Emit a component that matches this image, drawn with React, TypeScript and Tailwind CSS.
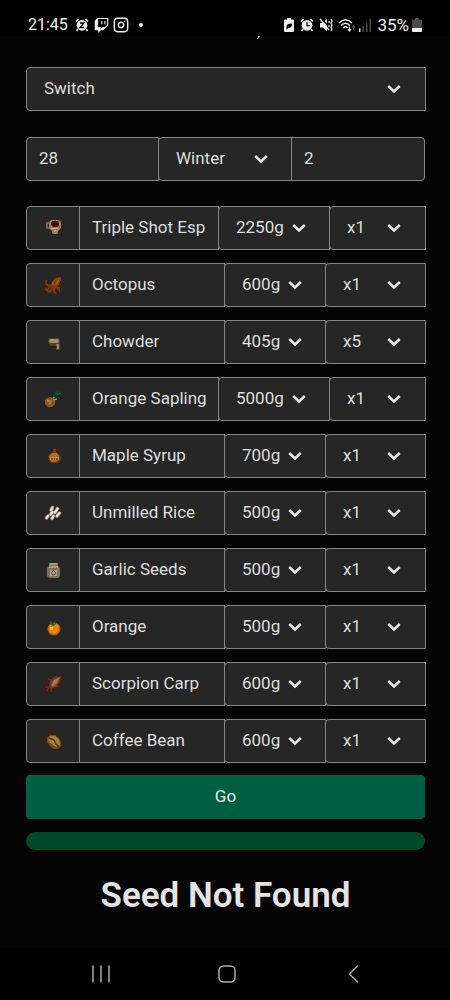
import { useState } from 'react';
import type { ReactNode } from 'react';
import { FaTwitch } from 'react-icons/fa';
import { Instagram } from 'lucide-react';

interface CartItem {
  name: string;
  prices: string[];
  quantity: string;
  icon: ReactNode;
}

const cartItems: CartItem[] = [
  {
    name: 'Triple Shot Espresso',
    prices: ['2250g'],
    quantity: 'x1',
    icon: (
      <>
        <path d="M6 4H3v5h4" stroke="#9c6c50" strokeWidth="1.6" />
        <path d="M7 1h8l2 2v6l-3 3v2l-1 1H9l-1-1v-2L5 9V3z" fill="#a47a60" />
        <path d="M8 2h6l1 2v3l-2 1H9L7 6V4z" fill="#3c0f10" />
        <path d="M7 9.500h7M10 12h2" stroke="#d0aa8b" />
      </>
    ),
  },
  {
    name: 'Octopus',
    prices: ['600g'],
    quantity: 'x1',
    icon: (
      <>
        <path d="M8 6l3-4 6-1v3l-3 6-3 3-4-3z" fill="#88420c" />
        <path d="M9 8L5 10 2 8V4M7 9l-4 5-2-1M9 10l-3 6-3-1M10 11v5l2 1M12 10l3 4v-3" stroke="#7f380b" strokeWidth="2" />
        <path d="M9 6v3m3-1 3-4" stroke="#b86613" strokeWidth="1.2" />
      </>
    ),
  },
  {
    name: 'Chowder',
    prices: ['405g'],
    quantity: 'x5',
    icon: (
      <>
        <path d="M5 5h10l1 2v10h-4v-4H7l-3-3V7z" fill="#55402f" />
        <path d="M6 6h8l1 2-1 2H6L5 8z" fill="#9b8966" />
        <path d="M12 11h3v5h-2v-3z" fill="#a3865d" />
        <path d="M7 7h2m2 1h2" stroke="#c0b18c" />
      </>
    ),
  },
  {
    name: 'Orange Sapling',
    prices: ['5000g'],
    quantity: 'x1',
    icon: (
      <>
        <path d="M3 8l4-1 4 2v5l-3 3H4l-3-3v-4z" fill="#8a5926" />
        <path d="M3 11h3v3m3-6 3-2m-3 4 4-1" stroke="#bd8841" strokeWidth="1.4" />
        <path d="M10 4l2-3 3 1 2-1v5l-3-1-2 3-3-2z" fill="#10422a" />
        <path d="M12 3l2 2 2-2" stroke="#17663b" />
      </>
    ),
  },
  {
    name: 'Maple Syrup',
    prices: ['700g'],
    quantity: 'x1',
    icon: (
      <>
        <path d="M9 2h3v3l4 3 1 4-3 4H7l-3-4 1-4 4-3z" fill="#803609" />
        <path d="M8 6h5l2 3-1 4-2 2H8l-2-2-1-4z" fill="#c26a12" />
        <path d="M6 10h9v3H6z" fill="#a38a65" />
        <path d="M7 12h2m1 0h1m1 0h2" stroke="#4d2414" />
        <path d="M9 3h3" stroke="#a33a14" />
      </>
    ),
  },
  {
    name: 'Unmilled Rice',
    prices: ['500g'],
    quantity: 'x1',
    icon: (
      <>
        <path
          d="M2.500 14l1.500-2M7 6l1.500-2.500M6.500 10.500l2-2.500M8 14.500l1.500-2.500M11 8.500l2.500-4M13 12l2.500-3"
          stroke="#6f5c4b"
          strokeWidth="3.8"
          strokeLinecap="round"
        />
        <path
          d="M2.500 14l1.500-2M7 6l1.500-2.500M6.500 10.500l2-2.500M8 14.500l1.500-2.500M11 8.500l2.500-4M13 12l2.500-3"
          stroke="#efe6dc"
          strokeWidth="2.4"
          strokeLinecap="round"
        />
      </>
    ),
  },
  {
    name: 'Garlic Seeds',
    prices: ['500g'],
    quantity: 'x1',
    icon: (
      <>
        <path d="M5 2h9v3l2 2v8l-2 2H5l-2-2V7l2-2z" fill="#80705a" />
        <path d="M6 3h7M5 6h9" stroke="#b7a789" strokeWidth="1.5" />
        <path d="M6 9h7v6H6z" fill="#b3a58b" />
        <path d="M9.500 9l-2 3 1 2h2l1-2z" stroke="#514839" />
      </>
    ),
  },
  {
    name: 'Orange',
    prices: ['500g'],
    quantity: 'x1',
    icon: (
      <>
        <circle cx="10" cy="11" r="6.5" fill="#bd5908" />
        <circle cx="10" cy="10.5" r="5.2" fill="#e9890b" />
        <path d="M6 9h3v3H6z" fill="#ffc12e" />
        <path d="M5 3l4 1 1 2 3-2-2 3-2 1-3-2z" fill="#1d5928" />
      </>
    ),
  },
  {
    name: 'Scorpion Carp',
    prices: ['600g'],
    quantity: 'x1',
    icon: (
      <>
        <path d="M1 12h4l2 1v4M5 12l-2 4M7 5L4 4M12 12l2-1" stroke="#8a1f14" strokeWidth="1.6" />
        <path d="M6 6l4-4 7-1-1 6-4 5-5 2-2-2z" fill="#6b3a20" />
        <path d="M7 10l3-5 6-3-3 6-4 4z" fill="#a97946" />
        <path d="M6 6l4-4 7-1" stroke="#6c2317" />
      </>
    ),
  },
  {
    name: 'Coffee Bean',
    prices: ['600g'],
    quantity: 'x1',
    icon: (
      <>
        <path d="M6 3h5l4 3 2 4v4l-3 3h-4l-4-3-3-4V6z" fill="#745020" />
        <path d="M6 4h5l4 4 1 5-3 2-3-1-6-6z" fill="#ac8136" />
        <path d="M5 6l5 2 2 4 3 3" stroke="#4f3412" strokeWidth="1.4" />
      </>
    ),
  },
];

const fieldClass = 'h-11 w-full min-w-0 appearance-none border border-[#858585] bg-[#262626] text-[17px] text-[#dedede] outline-none focus:border-white';
const inputClass = `${fieldClass} px-3 pb-0.5`;

interface SelectFieldProps {
  label: string;
  options: string[];
  className?: string;
  chevronClass?: string;
}

function SelectField({ label, options, className = '', chevronClass = 'mr-[25px]' }: SelectFieldProps) {
  const [value, setValue] = useState(options[0]);

  return (
    <div className={`grid items-center ${className}`}>
      <select
        aria-label={label}
        value={value}
        onChange={(e) => setValue(e.target.value)}
        className={`${fieldClass} col-start-1 row-start-1 rounded-l pl-[17px]`}
      >
        {options.map(option => (
          <option key={option}>{option}</option>
        ))}
      </select>
      <svg
        viewBox="0 0 14 10"
        className={`pointer-events-none col-start-1 row-start-1 h-[10px] w-[14px] justify-self-end ${chevronClass}`}
        aria-hidden="true"
      >
        <path d="M1.2 2L7 7.5 12.8 2" fill="none" stroke="#e6e6e6" strokeWidth="2.5" />
      </svg>
    </div>
  );
}

function ItemRow({ item }: { item: CartItem }) {
  const isWide = item.prices[0].length > 4;

  return (
    <div className="-mr-px flex">
      <div className="flex h-11 w-[54px] shrink-0 items-center justify-center rounded-l border border-[#858585] bg-[#262626]">
        <svg viewBox="0 0 18 18" className="h-[18px] w-[18px]" fill="none" aria-hidden="true">
          {item.icon}
        </svg>
      </div>
      <div className="-ml-px min-w-0 flex-1">
        <input aria-label="Item" defaultValue={item.name} className={inputClass} />
      </div>
      <SelectField
        label={`${item.name} price`}
        options={item.prices}
        className={isWide ? '-ml-px w-28 shrink-0' : '-ml-px w-[102px] shrink-0'}
        chevronClass="mr-6"
      />
      <SelectField
        label={`${item.name} quantity`}
        options={[item.quantity, item.quantity === 'x1' ? 'x5' : 'x1']}
        className={isWide ? '-ml-px w-[97px] shrink-0' : '-ml-px w-[101px] shrink-0'}
      />
    </div>
  );
}

function AlarmIcon({ children }: { children: ReactNode }) {
  return (
    <svg viewBox="0 0 14 14" className="h-[14px] w-[14px]" aria-hidden="true">
      <path d="M1 3.5L3.5 1M13 3.5L10.5 1M3 11l-1.5 2M11 11l1.5 2" stroke="#eee" strokeWidth="1.7" />
      <circle cx="7" cy="7.3" r="5.4" fill="#eee" />
      {children}
    </svg>
  );
}

function StatusBar() {
  return (
    <header className="flex h-9 items-center justify-between bg-black px-7 pt-[14px] text-[17px] leading-5 text-[#eee]">
      <div className="flex items-center">
        <span className="w-[47px] text-base leading-5">21:45</span>
        <AlarmIcon>
          <path d="M5 5h4L5 9.5h4" fill="none" stroke="#000" strokeWidth="1.3" />
        </AlarmIcon>
        <FaTwitch className="ml-[5px] h-[15px] w-[15px]" />
        <Instagram className="ml-1 h-4 w-4" strokeWidth={2.2} />
        <span className="ml-[10px] h-1 w-1 rounded-full bg-[#eee]" />
      </div>
      <div className="flex items-center">
        <svg viewBox="0 0 10 14" className="h-[14px] w-[10px]" aria-hidden="true">
          <path d="M3 0h4v1.5h2q1 0 1 1V13q0 1-1 1H1q-1 0-1-1V2.5q0-1 1-1h2z" fill="#eee" />
          <path d="M2.5 10V8q0-2.5 5.5-2.5Q8 10 4.5 10L2.5 11.5z" fill="#000" />
        </svg>
        <span className="ml-[6px]">
          <AlarmIcon>
            <path d="M7 4v3.7h3" fill="none" stroke="#000" strokeWidth="1.2" />
          </AlarmIcon>
        </span>
        <svg viewBox="0 0 14 14" className="ml-[5px] h-[14px] w-[14px]" fill="none" aria-hidden="true">
          <path d="M1 5h2.5L8 1v12L3.5 9.5H1z" fill="#eee" />
          <path d="M2 0l10 11" stroke="#000" strokeWidth="1.4" />
          <path d="M1 1l9 11" stroke="#eee" strokeWidth="1.3" />
          <path d="M12 1l1 2-1 2 1 2-1 2 1 2-1 2M10 3v2m0 2v2" stroke="#eee" strokeWidth="1.2" />
        </svg>
        <svg viewBox="0 0 18 14" className="ml-[5px] h-[14px] w-[18px]" fill="none" aria-hidden="true">
          <path d="M1 5q6.5-6.500 13 0M3 7.500q4.500-4.500 9 0M5.200 10q2.300-2.300 4.600 0" stroke="#eee" strokeWidth="1.500" />
          <path d="M11.500 8.500v4M10 11l1.500 2 1.500-2" stroke="#eee" strokeWidth="1.200" />
          <path d="M15.500 12V8M14 9.500L15.500 7.500 17 9.500" stroke="#555" strokeWidth="1.200" />
        </svg>
        <svg viewBox="0 0 14 14" className="ml-[2px] h-[14px] w-[14px]" aria-hidden="true">
          <path d="M1 10.500h1.500V14H1z" fill="#eee" />
          <path d="M4.500 8H6v6H4.500zM8 5h1.500v9H8zM11.500 1H13v13h-1.500z" fill="#4a4a4a" />
        </svg>
        <span className="ml-[5px]">35%</span>
        <svg viewBox="0 0 10 14" className="ml-[3px] h-[14px] w-[10px]" aria-hidden="true">
          <path d="M3 0h4v1.500h3V10H0V1.500h3z" fill="#4a4a4a" />
          <path d="M0 10h10v3q0 1-1 1H1q-1 0-1-1z" fill="#eee" />
        </svg>
      </div>
    </header>
  );
}

function NavigationBar() {
  return (
    <nav className="mt-auto grid h-[52px] grid-cols-3 items-center bg-black pr-[34px] pl-[38px]">
      <button aria-label="Recent apps" className="justify-self-center">
        <svg viewBox="0 0 18 18" className="h-[18px] w-[18px]" fill="none" stroke="#aaa" strokeWidth="1.5">
          <path d="M1 .5v17M9 .5v17M17 .5v17" />
        </svg>
      </button>
      <button aria-label="Home" className="justify-self-center">
        <svg viewBox="0 0 18 18" className="h-[18px] w-[18px]" fill="none" stroke="#aaa" strokeWidth="1.5">
          <rect x="1" y="1" width="16" height="16" rx="4.5" />
        </svg>
      </button>
      <button aria-label="Back" className="justify-self-center">
        <svg viewBox="0 0 18 18" className="h-[18px] w-[18px]" fill="none" stroke="#aaa" strokeWidth="1.5">
          <path d="M14 .5L5.500 9l8.500 8.500" />
        </svg>
      </button>
    </nav>
  );
}

export default function App() {
  const [isFound] = useState(false);

  return (
    <div className="flex min-h-screen flex-col bg-[#050505] font-[Roboto,sans-serif] text-[#e4e4e4]">
      <StatusBar />

      {/* tail of the intro text, scrolled under the status bar */}
      <div className="flex h-1 items-start justify-center pl-[66px]">
        <svg viewBox="0 0 3 3" className="h-[3px] w-[3px]" aria-hidden="true">
          <path d="M1 0h2L1 3H0z" fill="#bbb" />
        </svg>
      </div>

      <main className="pt-[27px] pr-[25px] pl-[26px]">
        <SelectField label="Platform" options={['Switch', 'PC', 'Mobile']} className="-mr-px" />

        <div className="mt-[26px] grid grid-cols-3">
          <input aria-label="Day" inputMode="numeric" defaultValue="28" className={`${inputClass} rounded-l`} />
          <SelectField
            label="Season"
            options={['Winter', 'Spring', 'Summer', 'Fall']}
            className="-ml-px"
            chevronClass="mr-6"
          />
          <div className="-ml-px">
            <input aria-label="Year" inputMode="numeric" defaultValue="2" className={`${inputClass} rounded-r`} />
          </div>
        </div>

        <div className="mt-[25px] flex flex-col gap-[13px]">
          {cartItems.map(item => (
            <ItemRow key={item.name} item={item} />
          ))}
        </div>

        <button className="mt-3 h-11 w-full rounded bg-[#005f40] text-[17px] text-[#e6f0ec]">
          Go
        </button>
        <div role="progressbar" aria-label="Search progress" className="mt-[13px] h-[18px] rounded-full bg-[#004a2a]" />

        <h1 className="mt-6 text-center text-[35px] leading-[44px] font-semibold">
          {isFound ? 'Seed Found' : 'Seed Not Found'}
        </h1>
      </main>

      <NavigationBar />
    </div>
  );
}
